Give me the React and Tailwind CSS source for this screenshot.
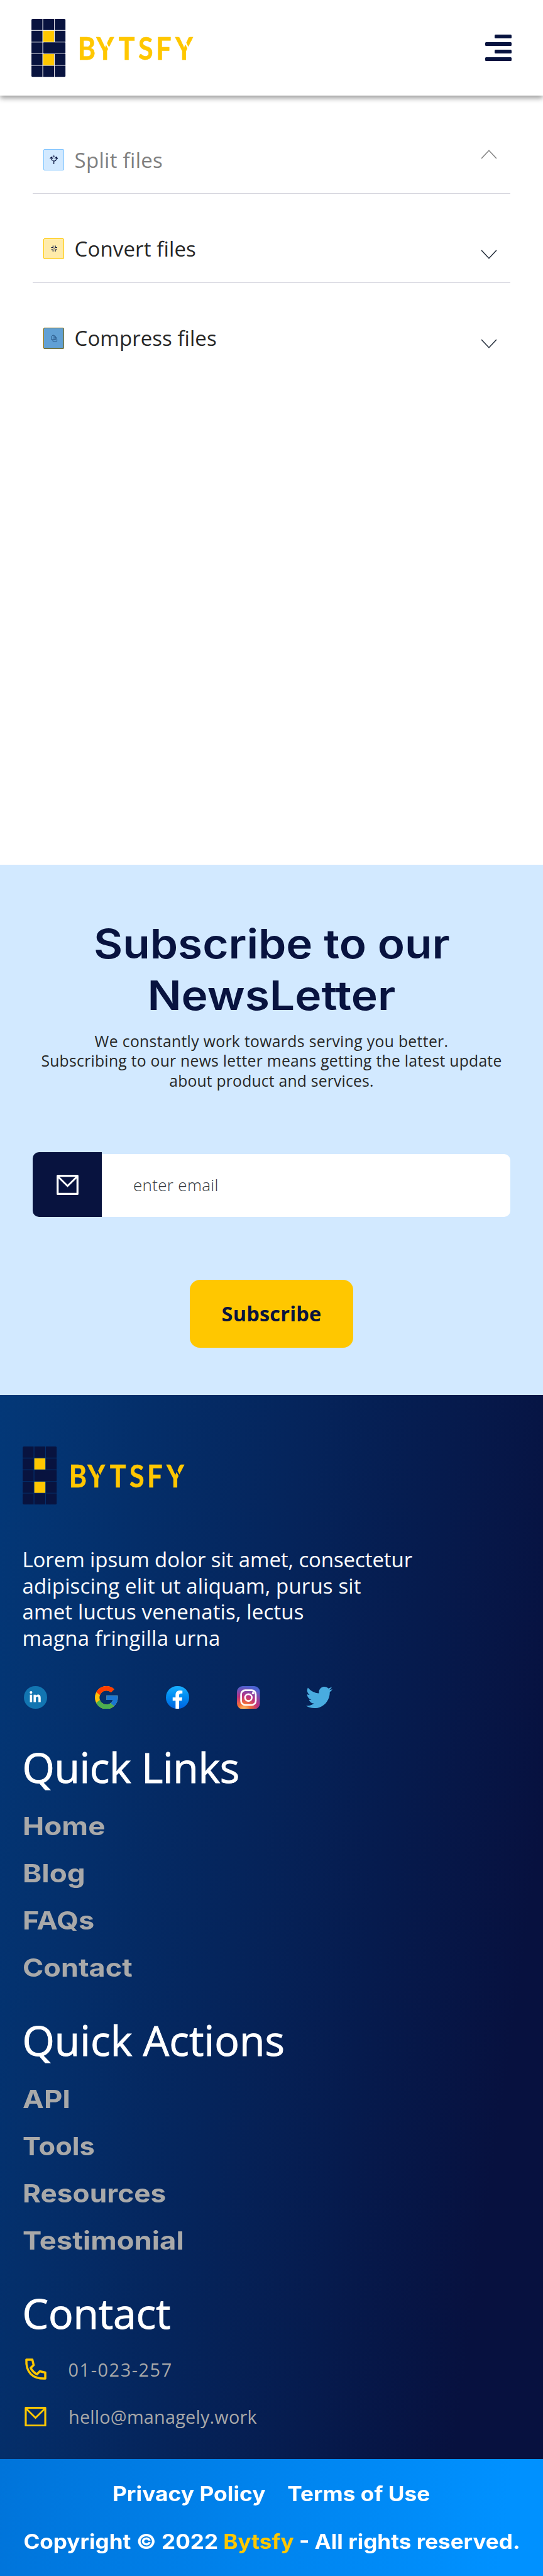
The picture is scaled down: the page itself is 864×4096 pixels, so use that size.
import { FaLinkedinIn, FaFacebookF, FaTwitter } from "react-icons/fa";
import { FcGoogle } from "react-icons/fc";

function T({ className = "", children }) {
  return <span className={"inline-block whitespace-nowrap " + className}>{children}</span>;
}

function Logo() {
  const rows = [43, 70, 96.7, 123.4, 150.2];
  const cols = [72, 98.7, 125.2];
  return (
    <svg viewBox="72 43 370 133" className="h-[92.5px] w-[257.4px] shrink-0 overflow-visible">
      <clipPath id="tile"><rect x="72" y="43" width="78" height="133" rx="3" /></clipPath>
      <mask id="notch" maskUnits="userSpaceOnUse" x="150" y="40" width="310" height="140">
        <rect x="150" y="40" width="310" height="140" fill="#fff" />
        <path d="M237.3 87.7 L249.5 112 M419.3 87.7 L431.5 112" stroke="#000" strokeWidth="3.6" />
      </mask>
      <g clipPath="url(#tile)">
        {rows.map((y, r) =>
          cols.map((x, c) =>
            r === 2 && c === 2 ? null : (
              <rect key={r + "-" + c} x={x} y={y} width={r === 2 && c === 1 ? 51.5 : 25.2} height="25.6"
                rx={r === 2 && c === 1 ? 2 : 0} fill={c === 1 && (r === 1 || r === 3) ? "#ffc700" : "#08133f"} />
            )
          )
        )}
      </g>
      <g mask="url(#notch)">
        <text transform="scale(.87 1)" x="204.6 253.2 312.2 363.8 410.3 461.4" y="137" fill="#ffc700" stroke="#ffc700" strokeWidth=".8" className="font-['Lato'] text-[71px] font-bold">BYTSFY</text>
      </g>
    </svg>
  );
}

function Chevron({ up }) {
  return (
    <svg viewBox="0 0 38 22" fill="none" strokeWidth="2.2" className={up ? "mb-[17px] h-[15px] w-[26px] stroke-[#808080]" : "mt-[17px] h-[15px] w-[26px] stroke-[#1f2937]"}>
      <path d={up ? "M1.5 20.5 L19 1.8 L36.5 20.5" : "M1.5 1.5 L19 20.2 L36.5 1.5"} />
    </svg>
  );
}

function SplitIcon() {
  return (
    <svg viewBox="0 0 48 48" fill="none" stroke="#08133f" strokeWidth="1.9" className="size-full">
      <path d="M24 35 V29 Q24 27 21 26 Q18 25 18 22 V18 M24 28 Q30 27 30 22 V18" />
      <path d="M14.5 22 L18 18 L22 22 M26 22 L30 18 L33.5 22" />
      <path d="M24 12.5 V19 M21 15.8 H27" strokeWidth="1.1" />
    </svg>
  );
}

function ConvertIcon() {
  return (
    <svg viewBox="0 0 48 48" fill="none" stroke="#08133f" strokeWidth="1.9" className="size-full">
      <path d="M22 16.2 V20.7 H17.5 M27.5 16.2 V20.7 H32 M22 30.5 V26 H17.5 M27.5 30.5 V26 H32" />
      <path d="M23 23.4 H26.5 M24.7 21.6 V25.2" strokeWidth=".6" />
    </svg>
  );
}

function CompressIcon() {
  return (
    <svg viewBox="0 0 48 48" fill="none" stroke="#16406f" strokeWidth="1.1" className="size-full">
      <path d="M18 20 L21 17 H24.5 V27.5 H18 Z M21.5 27.5 V31.5 H31.5 V26 L28.5 25 V27 H24.5" />
      <path d="M25 18 L28 19.5 V23 M26.5 21.5 L28.5 23.3 L30.5 21.5" />
    </svg>
  );
}

function Mail({ className }) {
  return (
    <svg viewBox="0 0 50 46" fill="none" stroke="currentColor" strokeWidth="4.6" strokeLinejoin="round" className={className}>
      <rect x="2.3" y="2.3" width="45.4" height="41.4" />
      <path d="M3.5 4.5 L25 25.5 L46.5 4.5" strokeLinejoin="miter" strokeWidth="4.2" />
    </svg>
  );
}

const files = [
  { name: "Split files", tile: "border-[#7cc3ff] bg-[#d2e9ff]", text: "text-[#808080]", track: "tracking-[0.292px]", Icon: SplitIcon, up: true },
  { name: "Convert files", tile: "border-[#ffc700] bg-[#ffebaa]", text: "text-[#272727]", track: "tracking-[0.127px]", Icon: ConvertIcon },
  { name: "Compress files", tile: "border-[#7f6400] bg-[#61a0d4]", text: "text-[#272727]", track: "tracking-[0.045px]", Icon: CompressIcon },
];

function Heading({ className, children }) {
  return (
    <h2 className="text-[66px] leading-[84px] text-white [-webkit-text-stroke:0.9px_white]">
      <T className={className}>{children}</T>
    </h2>
  );
}

function Links({ title, track, items }) {
  return (
    <div>
      <Heading className={track}>{title}</Heading>
      <ul className="mt-[14.6px]">
        {items.map(([t, scale]) => (
          <li key={t} className="h-[75.05px] font-['Inter'] text-[40.2px] font-bold leading-[75.05px] text-[#a9a9a9]"><T className={"origin-left " + scale}>{t}</T></li>
        ))}
      </ul>
    </div>
  );
}

export default function App() {
  return (
    <div className="flex h-[4096px] w-[864px] flex-col overflow-hidden bg-white font-['Open_Sans',sans-serif]">
      <header className="z-10 flex h-[152.3px] shrink-0 items-center justify-between bg-white px-[50px] shadow-[0_4px_8px_rgba(0,0,0,0.4)]">
        <Logo />
        <div className="flex flex-col items-end gap-[5.8px]">
          {[0, 1].map((k) => (
            <div key={k} className="contents">
              <span className="h-[6.3px] w-[27px] rounded-[1.5px] bg-[#08133f]" />
              <span className="h-[6.3px] w-[42px] rounded-[1.5px] bg-[#08133f]" />
            </div>
          ))}
        </div>
      </header>

      <main className="h-[1223px] shrink-0 px-[52px] pt-[14.4px]">
        {files.map(({ name, track, tile, text, Icon, up }, i) => (
          <div key={name} className={"flex h-[141.7px] items-center pt-[34px] pl-[16.7px] pr-[21px] " + (i < 2 ? "border-b border-[#d3d3dc]" : "")}>
            <span className={"size-[33.4px] rounded-[2px] border-[1.4px] " + tile}><Icon /></span>
            <span className={"ml-[16.5px] grow pt-px text-[33px] leading-[42px] " + text}><T className={track}>{name}</T></span>
            <Chevron up={up} />
          </div>
        ))}
      </main>

      <section className="flex h-[843.1px] shrink-0 flex-col items-center bg-[#d2e9ff] px-[52px] pt-[86.2px]">
        <h1 className="text-center font-['Inter'] text-[64.3px] font-semibold leading-[81.4px] text-[#08133f]">
          <T className="scale-x-[1.105]">Subscribe to our</T><br /><T className="scale-x-[1.11]">NewsLetter</T>
        </h1>
        <p className="mt-4 text-center text-[24.7px] leading-[31.15px] text-[#272727]">
          <T className="tracking-[0.355px]">We constantly work towards serving you better.</T><br />
          <T className="tracking-[0.273px]">Subscribing to our news letter means getting the latest update</T><br />
          <T className="tracking-[0.208px]">about product and services.</T>
        </p>
        <div className="mt-[98.7px] flex h-[102.3px] w-full items-end">
          <div className="flex h-full w-[110px] items-center justify-center rounded-l-[10px] bg-[#08133f] text-white">
            <Mail className="h-[32px] w-[35px]" />
          </div>
          <div className="flex h-[100px] grow items-center rounded-r-[10px] bg-white pl-[50px] text-[26px] font-light text-[#33373d]"><T className="tracking-[0.308px]">enter email</T></div>
        </div>
        <button className="mt-[100px] h-[108.5px] w-[260.2px] rounded-[16px] bg-[#ffc700] text-[32.5px] font-bold text-[#08133f]"><T className="tracking-[0.2px]">Subscribe</T></button>
      </section>

      <footer className="flex h-[1691.2px] shrink-0 flex-col bg-[linear-gradient(98deg,#033878_0%,#07113f_87%)] pl-[35.5px] pt-[82px]">
        <Logo />
        <p className="mt-[66px] text-[33px] leading-[41.74px] text-white">
          <T className="tracking-[-0.103px]">Lorem ipsum dolor sit amet, consectetur</T><br />
          <T className="tracking-[0.145px]">adipiscing elit ut aliquam, purus sit</T><br />
          <T className="tracking-[0.134px]">amet luctus venenatis, lectus</T><br />
          <T className="tracking-[0.295px]">magna fringilla urna</T>
        </p>
        <div className="mt-[52px] flex items-center gap-[76.5px] pl-[2.5px]">
          <span className="flex size-[36.6px] items-center justify-center rounded-full bg-[#1275b1] text-white"><FaLinkedinIn className="size-5" /></span>
          <svg viewBox="4 4 40 40" className="size-[36.6px]"><FcGoogle size={48} /></svg>
          <span className="flex size-[36.6px] items-end justify-center overflow-hidden rounded-full bg-linear-to-b from-[#19afff] to-[#0062e0] text-white"><FaFacebookF className="h-[29px] w-[19px]" /></span>
          <svg viewBox="0 0 36 36" className="size-[36.6px]">
            <defs>
              <radialGradient id="ig" cx=".3" cy="1.05" r="1.05">
                <stop offset="0" stopColor="#fed576" /><stop offset=".27" stopColor="#f47133" /><stop offset=".6" stopColor="#bc3081" /><stop offset="1" stopColor="#4c63d2" />
              </radialGradient>
            </defs>
            <rect width="36" height="36" rx="9" fill="url(#ig)" />
            <rect x="6.5" y="6.5" width="23" height="23" rx="6.5" fill="none" stroke="#fff" strokeWidth="2.6" />
            <circle cx="18" cy="18" r="5.3" fill="none" stroke="#fff" strokeWidth="2.6" />
            <circle cx="25.2" cy="11" r="1.8" fill="#fff" />
          </svg>
          <FaTwitter className="-ml-[3px] size-[42px] text-[#49ace0]" />
        </div>
        <div className="mt-[47.5px]">
          <Links title="Quick Links" track="tracking-[-0.4px]" items={[["Home", "scale-x-[1.14]"], ["Blog", "scale-x-[1.14]"], ["FAQs", "scale-x-[1.12]"], ["Contact", "scale-x-[1.12]"]]} />
        </div>
        <div className="mt-[35.3px]">
          <Links title="Quick Actions" track="tracking-[0.024px]" items={[["API", "scale-x-[1.13]"], ["Tools", "scale-x-[1.08]"], ["Resources", "scale-x-[1.1]"], ["Testimonial", "scale-x-[1.13]"]]} />
        </div>
        <div className="mt-[35.3px]"><Heading className="tracking-[-0.18px]">Contact</Heading></div>
        <div className="mt-[10.5px] flex h-[75px] items-center text-[28.8px] text-[#a9a9a9]">
          <svg viewBox="0 0 24 24" fill="none" stroke="#ffc700" strokeWidth="2.2" strokeLinejoin="round" className="ml-[2px] mr-[33px] size-[38px]">
            <path d="M2.5 2.5 H8.5 L9.8 8 L6.8 10.8 Q9 15 13.2 17.2 L16 14.2 L21.5 15.5 V21.5 Q12 21.8 7 17 Q2 12 2.5 2.5 Z" />
          </svg>
          <T className="tracking-[1.6px]">01-023-257</T>
        </div>
        <div className="flex h-[75px] items-center text-[28.8px] text-[#a9a9a9]">
          <Mail className="ml-[3.5px] mr-[35px] h-[31.5px] w-[35px] text-[#ffc700]" />
          <T className="tracking-[0.231px]">hello@managely.work</T>
        </div>
      </footer>

      <div className="flex grow flex-col items-center bg-[linear-gradient(98deg,#0074da_0%,#0091ff_92%)] pt-[18.8px] font-['Inter'] text-[32.2px] font-bold leading-[75.4px] text-white">
        <div className="flex gap-[55px]"><T className="scale-x-[1.1]">Privacy Policy</T><T className="scale-x-[1.095]">Terms of Use</T></div>
        <div><T className="scale-x-[1.09]">Copyright © 2022 <span className="text-[#ffc700]">Bytsfy</span> - All rights reserved.</T></div>
      </div>
    </div>
  );
}
